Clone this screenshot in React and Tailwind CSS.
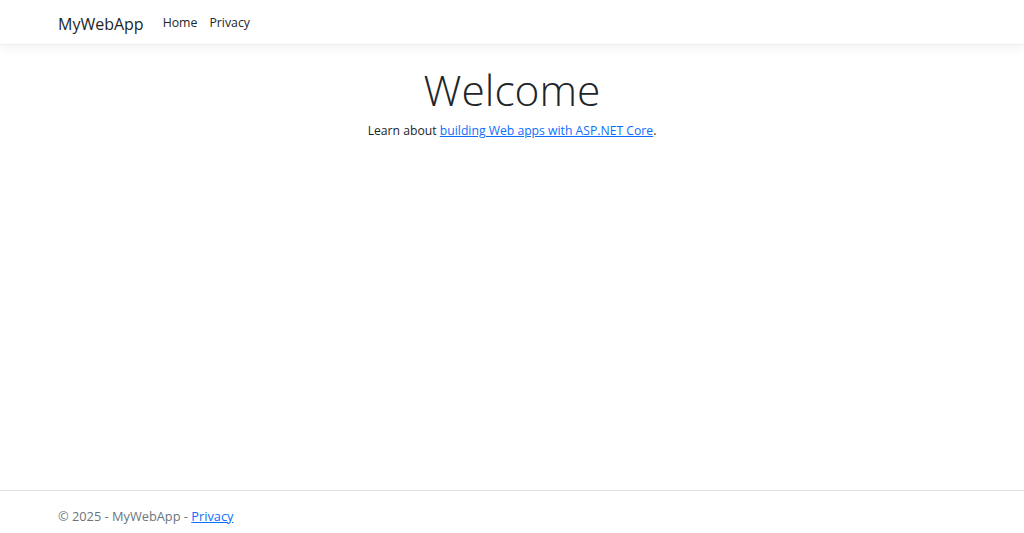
export default function App() {
  return (
    <div className="flex min-h-screen flex-col bg-white font-['Open_Sans',sans-serif] text-[#212529]">
      <header className="h-[45px] border-b border-[#eeeeee] bg-white shadow-[0_4px_12px_rgba(0,0,0,0.05)]">
        <nav className="flex h-full items-center px-[58px] pt-[3px]">
          <a className="mr-[19px] text-[16px] text-[#212529]">MyWebApp</a>
          <ul className="flex gap-[12px] text-[12.3px]">
            <li>
              <a className="text-[#212529]">Home</a>
            </li>
            <li>
              <a className="text-[#212529]">Privacy</a>
            </li>
          </ul>
        </nav>
      </header>

      <main className="flex-1 pt-[18px] text-center">
        <h1 className="text-[42.5px] font-light leading-[54px]">Welcome</h1>
        <p className="mt-[5px] text-[12.2px]">
          Learn about{" "}
          <a className="text-[#0d6efd] underline">building Web apps with ASP.NET Core</a>.
        </p>
      </main>

      <footer className="h-[43px] border-t border-[#dee2e6] px-[58px] pt-[16px] text-[12.8px] text-[#6c757d]">
        © 2025 - MyWebApp - <a className="text-[#0d6efd] underline">Privacy</a>
      </footer>
    </div>
  );
}
